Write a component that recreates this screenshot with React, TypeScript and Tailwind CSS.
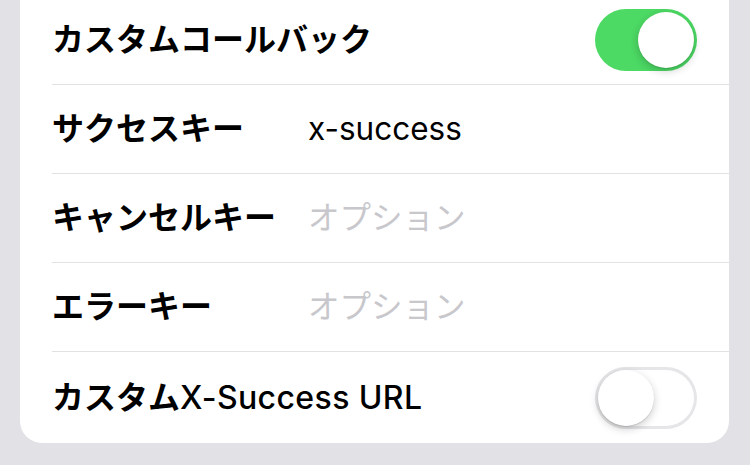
import React from "react";

const jp = { fontFamily: 'Inter, "Noto Sans CJK JP", sans-serif' };

function Toggle({ on }: { on: boolean }) {
  return on ? (
    <div className="relative h-[62px] w-[102px] rounded-full bg-[#4cd964]">
      <div className="absolute right-[3px] top-[3px] h-[56px] w-[56px] rounded-full bg-white shadow-[0_3px_8px_rgba(0,0,0,0.2),0_1px_1px_rgba(0,0,0,0.1)]" />
    </div>
  ) : (
    <div className="relative h-[62px] w-[102px] rounded-full bg-white shadow-[inset_0_0_0_3px_#e6e6e8]">
      <div className="absolute left-[3px] top-[3px] h-[56px] w-[56px] rounded-full bg-white shadow-[0_3px_8px_rgba(0,0,0,0.2),0_1px_1px_rgba(0,0,0,0.12)]" />
    </div>
  );
}

function Row({
  first,
  label,
  children,
  h = "h-[89px]",
}: {
  first?: boolean;
  label: React.ReactNode;
  children?: React.ReactNode;
  h?: string;
}) {
  return (
    <div className="pl-[32px]">
      <div
        className={`flex items-center pr-[32px] ${h} ${first ? "" : "border-t border-[#e2e2e4]"}`}
      >
        <div className="w-[256px] shrink-0 text-[32px] font-semibold text-black whitespace-nowrap">
          {label}
        </div>
        <div className="flex flex-1 items-center justify-between">{children}</div>
      </div>
    </div>
  );
}

export default function App() {
  return (
    <div className="h-[465px] w-[750px] overflow-hidden bg-[#e1e1e6]" style={jp}>
      <div className="ml-[20px] mt-[-5px] w-[709px] overflow-hidden rounded-b-[22px] bg-white">
        <Row first label="カスタムコールバック">
          <span />
          <Toggle on />
        </Row>
        <Row label="サクセスキー">
          <span className="text-[31.5px] font-normal text-black">x-success</span>
        </Row>
        <Row label="キャンセルキー">
          <span className="text-[31.5px] font-normal text-[#c7c7cc]">オプション</span>
        </Row>
        <Row label="エラーキー">
          <span className="text-[31.5px] font-normal text-[#c7c7cc]">オプション</span>
        </Row>
        <Row
          h="h-[92px]"
          label={
            <span>
              カスタム<span className="font-medium tracking-[0.4px]">X-Success URL</span>
            </span>
          }
        >
          <span />
          <Toggle on={false} />
        </Row>
      </div>
    </div>
  );
}
